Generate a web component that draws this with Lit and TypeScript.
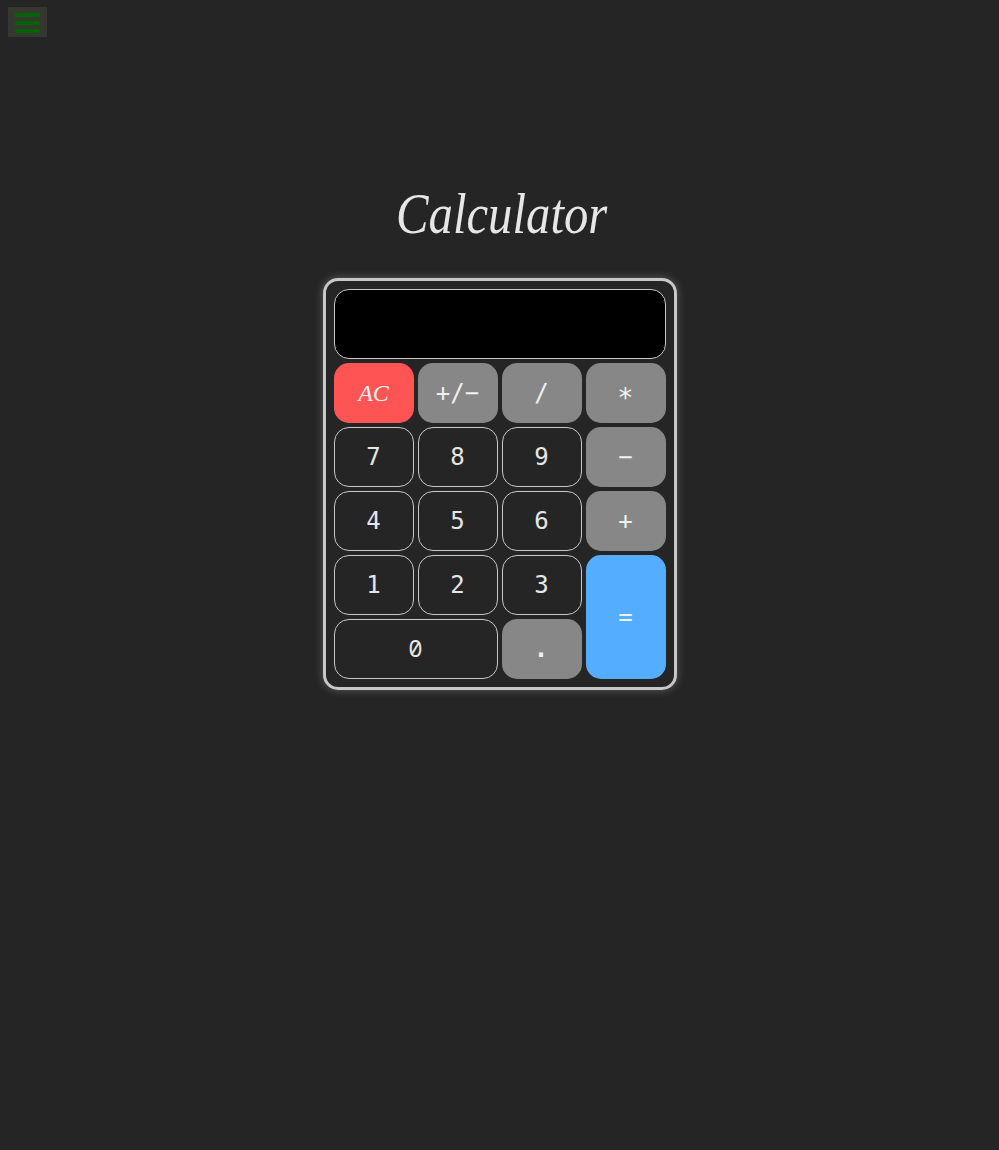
import { LitElement, html, css } from "lit";
import { customElement } from "lit/decorators.js";

type Key = { label: string; kind: string };

const KEYS: Key[] = [
  { label: "AC", kind: "clear" },
  { label: "+/−", kind: "op" },
  { label: "/", kind: "op" },
  { label: "*", kind: "op star" },
  { label: "7", kind: "num" },
  { label: "8", kind: "num" },
  { label: "9", kind: "num" },
  { label: "−", kind: "op" },
  { label: "4", kind: "num" },
  { label: "5", kind: "num" },
  { label: "6", kind: "num" },
  { label: "+", kind: "op" },
  { label: "1", kind: "num" },
  { label: "2", kind: "num" },
  { label: "3", kind: "num" },
  { label: "=", kind: "equals" },
  { label: "0", kind: "num wide" },
  { label: ".", kind: "op dot" },
];

@customElement("app-root")
export class AppRoot extends LitElement {
  static styles = css`
    :host {
      display: flex;
      flex-direction: column;
      align-items: center;
      box-sizing: border-box;
      min-height: 1150px;
      background: #252525;
      color: #e6e6e6;
    }
    .menu {
      align-self: flex-start;
      display: flex;
      flex-direction: column;
      justify-content: flex-start;
      gap: 4px;
      box-sizing: border-box;
      width: 39px;
      height: 30px;
      margin: 7px 0 0 8px;
      padding: 6px 7px 0;
      border: 0;
      background: #373732;
    }
    .bar {
      flex: none;
      width: 25px;
      height: 4px;
      background: #006400;
      border-radius: 1px;
    }
    .title {
      margin: 142px 0 0;
      height: 99px;
      font: italic 400 58px/70px "Z003", "URW Chancery L", "Liberation Serif", cursive;
      white-space: nowrap;
      transform: translateX(2px) scaleX(0.84);
    }
    .calc {
      display: grid;
      grid-template-columns: repeat(4, 80px);
      grid-template-rows: 70px repeat(5, 60px);
      gap: 4px;
      padding: 8px;
      border: 3px solid #c8c8c8;
      border-radius: 15px;
      box-shadow: 0 0 8px rgba(200, 200, 200, 0.35);
    }
    .display {
      grid-column: 1 / -1;
      border: 1px solid #c8c8c8;
      border-radius: 15px;
      background: #000;
    }
    .key {
      padding: 0;
      border: 0;
      border-radius: 15px;
      color: #f0f0f0;
      font: 24px "Menlo", "DejaVu Sans Mono", monospace;
    }
    .num {
      border: 1px solid #c8c8c8;
      background: #252525;
      color: #e6e6e6;
    }
    .op {
      background: #878787;
    }
    .dot {
      font-weight: 700;
      padding-right: 1px;
    }
    .star {
      padding-top: 8px;
      font-size: 27px;
    }
    .clear {
      background: #ff5454;
      font: italic 24px "Z003", "URW Chancery L", "Liberation Serif", cursive;
    }
    .equals {
      grid-row: span 2;
      background: #54adff;
    }
    .wide {
      grid-column: span 2;
      padding-bottom: 3px;
      font-family: "Menlo", "Noto Sans Mono", monospace;
    }
  `;

  render() {
    return html`
      <button class="menu" aria-label="Menu">
        <span class="bar"></span><span class="bar"></span><span class="bar"></span>
      </button>
      <h1 class="title">Calculator</h1>
      <main class="calc">
        <div class="display"></div>
        ${KEYS.map((k) => html`<button class="key ${k.kind}">${k.label}</button>`)}
      </main>
    `;
  }
}
